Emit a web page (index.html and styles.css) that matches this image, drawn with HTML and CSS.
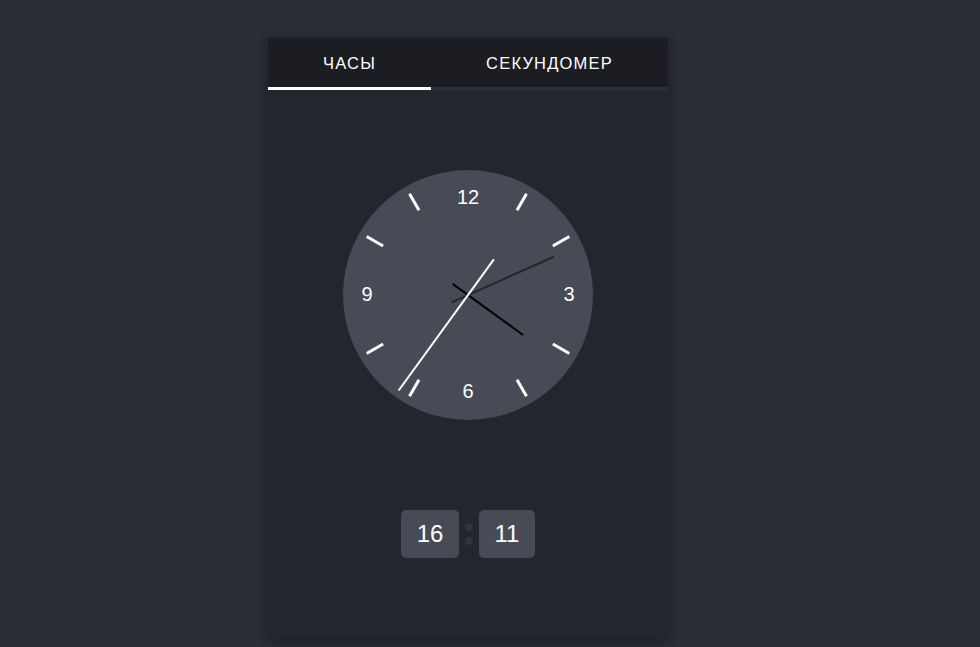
FILE: index.html
```html
<!DOCTYPE html>
<html lang="ru">
<head>
<meta charset="utf-8">
<title>Часы</title>
<link rel="stylesheet" href="styles.css">
</head>
<body>
<div class="page">
  <div class="card">
    <div class="tabs">
      <div class="tab active">Часы</div>
      <div class="tab">Секундомер</div>
    </div>
    <div class="track"><div class="indicator"></div></div>
    <div class="content">
      <svg class="clock" width="250" height="250" viewBox="0 0 250 250">
        <circle cx="125" cy="125" r="125" fill="#464b55"/>
        <g stroke="#ffffff" stroke-width="3">
          <line x1="125" y1="8" x2="125" y2="27" transform="rotate(30 125 125)"/>
          <line x1="125" y1="8" x2="125" y2="27" transform="rotate(60 125 125)"/>
          <line x1="125" y1="8" x2="125" y2="27" transform="rotate(120 125 125)"/>
          <line x1="125" y1="8" x2="125" y2="27" transform="rotate(150 125 125)"/>
          <line x1="125" y1="8" x2="125" y2="27" transform="rotate(210 125 125)"/>
          <line x1="125" y1="8" x2="125" y2="27" transform="rotate(240 125 125)"/>
          <line x1="125" y1="8" x2="125" y2="27" transform="rotate(300 125 125)"/>
          <line x1="125" y1="8" x2="125" y2="27" transform="rotate(330 125 125)"/>
        </g>
        <g class="num" fill="#ffffff" text-anchor="middle">
          <text x="125" y="34">12</text>
          <text x="226" y="131">3</text>
          <text x="125" y="228">6</text>
          <text x="24" y="131">9</text>
        </g>
        <line x1="125" y1="144" x2="125" y2="57" stroke="#000000" stroke-width="2" transform="rotate(126 125 125)"/>
        <line x1="125" y1="143" x2="125" y2="31" stroke="#22262d" stroke-width="2" transform="rotate(66 125 125)"/>
        <line x1="125" y1="169" x2="125" y2="7" stroke="#ffffff" stroke-width="2" transform="rotate(216 125 125)"/>
      </svg>
      <div class="digital">
        <div class="digit">16</div>
        <div class="colon"><span class="dot"></span><span class="dot"></span></div>
        <div class="digit">11</div>
      </div>
    </div>
  </div>
</div>
</body>
</html>
```
FILE: styles.css
```css
html, body {
  margin: 0;
  padding: 0;
  background: #2b2e35;
  font-family: "Liberation Sans", Arial, sans-serif;
}
.page {
  padding: 38px 0 0 268px;
  height: 647px;
  box-sizing: border-box;
}
.card {
  width: 400px;
  height: 600px;
  background: #22262d;
  box-shadow: 0 2px 14px rgba(0, 0, 0, 0.45);
  display: flex;
  flex-direction: column;
}
.tabs {
  display: flex;
  height: 49px;
  background: #1b1d22;
}
.tab {
  flex: 1 1 auto;
  display: flex;
  align-items: center;
  justify-content: center;
  color: #ffffff;
  font-size: 16.5px;
  letter-spacing: 1.2px;
  text-transform: uppercase;
  padding-top: 2px;
}
.track {
  height: 3px;
  background: #2c2f35;
  display: flex;
}
.indicator {
  width: 163px;
  background: #ffffff;
}
.content {
  flex: 1;
  display: flex;
  flex-direction: column;
  align-items: center;
  padding-top: 80px;
}
.clock {
  display: block;
}
.num {
  font-family: "Liberation Sans", Arial, sans-serif;
  font-size: 20px;
}
.digital {
  margin-top: 90px;
  display: flex;
  align-items: center;
}
.digit {
  height: 48px;
  padding: 0 15.5px;
  display: flex;
  align-items: center;
  background: #464b55;
  border-radius: 5px;
  color: #ffffff;
  font-size: 24px;
}
.colon {
  width: 8px;
  margin: 0 6px;
  display: flex;
  flex-direction: column;
  gap: 6px;
}
.dot {
  width: 8px;
  height: 8px;
  border-radius: 50%;
  background: #30343b;
}
```
